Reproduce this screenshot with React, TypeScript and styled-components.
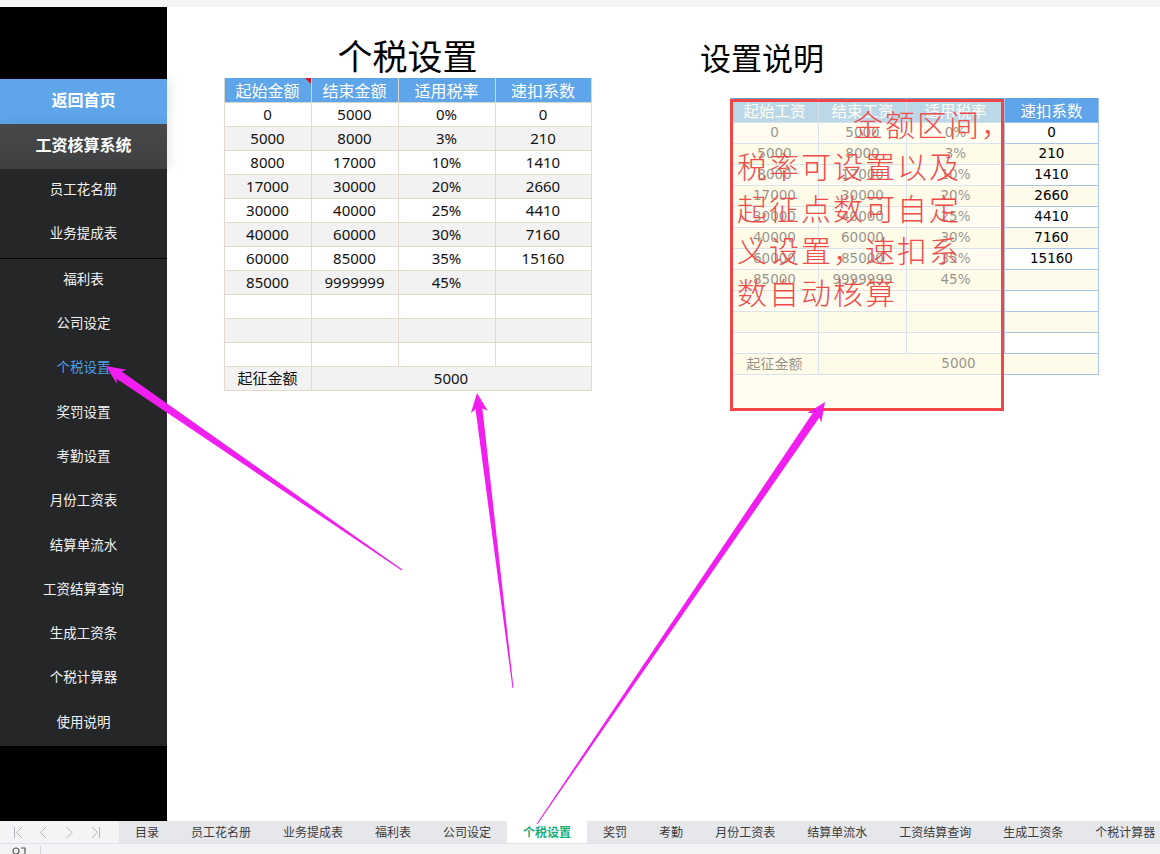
import React from 'react'
import styled, { createGlobalStyle } from 'styled-components'

const GlobalStyle = createGlobalStyle`
  html, body {
    margin: 0;
    padding: 0;
    background: #ffffff;
  }
  body {
    font-family: "Noto Sans", "Noto Sans CJK SC", sans-serif;
  }
  * {
    box-sizing: border-box;
  }
`

const Page = styled.div`
  position: relative;
  width: 1160px;
  height: 854px;
  display: flex;
  flex-direction: column;
  overflow: hidden;
`

const TopStrip = styled.div`
  flex: none;
  height: 7px;
  background: #f4f5f7;
`

const Main = styled.div`
  flex: none;
  height: 814px;
  display: flex;
`

/* ---------- sidebar ---------- */

const Sidebar = styled.nav`
  flex: none;
  width: 167px;
  background: #000;
  padding-top: 72px;
  display: flex;
  flex-direction: column;
  position: relative;
  z-index: 1;
`

const SideHead = styled.div<{ $home?: boolean }>`
  flex: none;
  height: 45px;
  padding-bottom: 6px;
  display: flex;
  align-items: center;
  justify-content: center;
  color: #fff;
  font-family: "Noto Sans CJK SC", sans-serif;
  font-size: 16px;
  font-weight: 700;
  background: ${p => (p.$home ? '#5ea5e9' : 'linear-gradient(#46484a, #3e4042)')};
  box-shadow: 3px 0 10px rgba(0, 0, 0, 0.09);
`

const MenuGroup = styled.div<{ $divider?: boolean }>`
  flex: none;
  background: #252628;
  border-bottom: ${p => (p.$divider ? '1px solid #050505' : 'none')};
`

const MenuItem = styled.div<{ $active?: boolean }>`
  height: 44.3px;
  padding-bottom: 6px;
  display: flex;
  align-items: center;
  justify-content: center;
  font-family: "Noto Sans CJK SC", sans-serif;
  font-size: 13.5px;
  color: ${p => (p.$active ? '#4d9fe6' : '#f2f2f2')};
`

/* ---------- content ---------- */

const Content = styled.main`
  flex: 1;
  background: #fff;
  display: flex;
  align-items: flex-start;
  padding: 28px 0 0 57px;
  gap: 109px;
`

const LeftBlock = styled.section`
  width: 367px;
  display: flex;
  flex-direction: column;
  align-items: center;
`

const BigTitle = styled.h1`
  margin: 0 0 3px;
  height: 40px;
  font-family: "Noto Sans CJK SC", sans-serif;
  font-weight: 400;
  font-size: 35px;
  line-height: 40px;
  color: #000;
`

const Sheet = styled.table`
  border-collapse: collapse;
  table-layout: fixed;
  width: 367px;
  font-family: "Noto Sans", "Noto Sans CJK SC", sans-serif;
  font-size: 15px;
  color: #111;
`

const Col = styled.col<{ $w: number }>`
  width: ${p => p.$w}px;
`

const HeadCell = styled.th<{ $flag?: boolean }>`
  position: relative;
  height: 24px;
  padding: 0;
  background: #5fa5e9;
  color: #fff;
  font-family: "Noto Sans CJK SC", sans-serif;
  font-weight: 400;
  font-size: 16px;
  line-height: 22px;
  border: 1px solid #dcd6c8;
  border-top: none;

  &::after {
    content: '';
    display: ${p => (p.$flag ? 'block' : 'none')};
    position: absolute;
    top: 0;
    right: 0;
    border-left: 6px solid transparent;
    border-top: 6px solid #e0101a;
  }
`

const SheetRow = styled.tr<{ $shade: boolean }>`
  background: ${p => (p.$shade ? '#f2f2f2' : '#ffffff')};
`

const Cell = styled.td`
  height: 24px;
  padding: 0;
  text-align: center;
  line-height: 22px;
  border: 1px solid #e3dccb;
  white-space: nowrap;
`

const RightBlock = styled.section`
  display: flex;
  flex-direction: column;
  padding-top: 4px;
`

const NoteTitle = styled.h2`
  margin: 0 0 23px;
  height: 36px;
  font-family: "Noto Sans CJK SC", sans-serif;
  font-weight: 400;
  font-size: 31px;
  line-height: 36px;
  color: #000;
`

const ShotWrap = styled.div`
  position: relative;
  margin-left: 30px;
  width: 368px;
`

const ShotTable = styled.table`
  border-collapse: collapse;
  table-layout: fixed;
  width: 368px;
  font-family: "DejaVu Sans", "Noto Sans CJK SC", sans-serif;
  font-size: 13.5px;
  color: #000;
`

const ShotHead = styled.th`
  height: 24px;
  padding: 0;
  background: #5fa4e8;
  color: #fff;
  font-family: "Noto Sans CJK SC", sans-serif;
  font-weight: 400;
  font-size: 15.5px;
  line-height: 22px;
  border: 1px solid #9fbfe6;
  border-top: none;
`

const ShotRow = styled.tr<{ $shade: boolean }>`
  background: ${p => (p.$shade ? '#fffbea' : '#ffffff')};
`

const ShotCell = styled.td`
  height: 21px;
  padding: 0;
  text-align: center;
  line-height: 19px;
  border: 1px solid #a8c4e8;
  white-space: nowrap;
`

const ShotLabel = styled(ShotCell)`
  font-family: "Noto Sans CJK SC", sans-serif;
  font-size: 14px;
`

const NoteBox = styled.div`
  position: absolute;
  left: 0;
  top: 1px;
  width: 274px;
  height: 312px;
  border: 3px solid #f24646;
  background: rgba(255, 251, 232, 0.58);
  padding: 0 0 0 4px;
`

const NoteLine = styled.div<{ $indent?: number }>`
  padding-left: ${p => p.$indent ?? 0}px;
  font-family: "Noto Sans CJK SC", sans-serif;
  font-weight: 300;
  font-size: 30px;
  letter-spacing: 2px;
  line-height: 42px;
  color: #f04c4c;
  white-space: nowrap;
`

/* ---------- sheet tabs ---------- */

const TabBar = styled.div`
  flex: none;
  height: 22px;
  display: flex;
  background: #e6e7eb;
`

const NavArea = styled.div`
  width: 119px;
  flex: none;
  display: flex;
  align-items: center;
  padding-left: 5px;
  background: #f3f4f6;
`

const NavBtn = styled.span`
  width: 26px;
  height: 22px;
  display: flex;
  align-items: center;
  justify-content: center;
`

const Tab = styled.div<{ $active?: boolean }>`
  flex: none;
  padding: 0 16px;
  font-family: "Noto Sans CJK SC", sans-serif;
  font-size: 12px;
  line-height: 22px;
  white-space: nowrap;
  color: ${p => (p.$active ? '#17ae78' : '#3a3a3a')};
  font-weight: ${p => (p.$active ? 700 : 400)};
  background: ${p => (p.$active ? '#ffffff' : 'transparent')};
`

const StatusBar = styled.div`
  flex: none;
  height: 11px;
  display: flex;
  align-items: flex-end;
  background: #f3f4f6;
  border-top: 1px solid #e1e2e5;
  padding-left: 12px;
  overflow: hidden;
`

const StatusSep = styled.span`
  width: 1px;
  height: 8px;
  margin-left: 13px;
  background: #d6d7da;
`

const ArrowLayer = styled.svg`
  position: absolute;
  left: 0;
  top: 0;
  width: 1160px;
  height: 854px;
  pointer-events: none;
  z-index: 5;
`

/* ---------- data ---------- */

const sideTop = ['员工花名册', '业务提成表']
const sideRest = ['福利表', '公司设定', '个税设置', '奖罚设置', '考勤设置', '月份工资表', '结算单流水', '工资结算查询', '生成工资条', '个税计算器', '使用说明']
const tabs = ['目录', '员工花名册', '业务提成表', '福利表', '公司设定', '个税设置', '奖罚', '考勤', '月份工资表', '结算单流水', '工资结算查询', '生成工资条', '个税计算器']

const rates: (string | number)[][] = [
  [0, 5000, '0%', 0],
  [5000, 8000, '3%', 210],
  [8000, 17000, '10%', 1410],
  [17000, 30000, '20%', 2660],
  [30000, 40000, '25%', 4410],
  [40000, 60000, '30%', 7160],
  [60000, 85000, '35%', 15160],
  [85000, 9999999, '45%', ''],
  ['', '', '', ''],
  ['', '', '', ''],
  ['', '', '', ''],
]

function arrowPoints(tx: number, ty: number, px: number, py: number, shaft: number) {
  const dx = px - tx
  const dy = py - ty
  const len = Math.hypot(dx, dy)
  const ux = dx / len
  const uy = dy / len
  const nx = -uy
  const ny = ux
  const headLen = 19
  const headW = 17
  const bx = px - ux * headLen
  const by = py - uy * headLen
  const pts = [
    [tx + nx * 0.5, ty + ny * 0.5],
    [bx + nx * shaft / 2 + ux * 3, by + ny * shaft / 2 + uy * 3],
    [bx + nx * headW / 2, by + ny * headW / 2],
    [px, py],
    [bx - nx * headW / 2, by - ny * headW / 2],
    [bx - nx * shaft / 2 + ux * 3, by - ny * shaft / 2 + uy * 3],
    [tx - nx * 0.5, ty - ny * 0.5],
  ]
  return pts.map(p => `${p[0].toFixed(1)},${p[1].toFixed(1)}`).join(' ')
}

const arrows = [
  { t: [402, 570], p: [106, 366], w: 9 },
  { t: [513, 688], p: [477, 393], w: 7 },
  { t: [537, 824], p: [825, 402], w: 8 },
]

const Chevron: React.FC<{ dir: 'first' | 'prev' | 'next' | 'last' }> = ({ dir }) => {
  const d = {
    first: 'M1.5 1 V12 M9 1 L3.5 6.5 L9 12',
    prev: 'M7 1 L1.5 6.5 L7 12',
    next: 'M1.5 1 L7 6.5 L1.5 12',
    last: 'M1 1 L6.5 6.5 L1 12 M8.5 1 V12',
  }[dir]
  return (
    <svg width="10" height="13" viewBox="0 0 10 13">
      <path d={d} fill="none" stroke="#b3b5b9" strokeWidth="1" />
    </svg>
  )
}

const App: React.FC = () => {
  return (
    <Page>
      <GlobalStyle />
      <TopStrip />
      <Main>
        <Sidebar>
          <SideHead $home>返回首页</SideHead>
          <SideHead>工资核算系统</SideHead>
          <MenuGroup $divider>
            {sideTop.map(s => <MenuItem key={s}>{s}</MenuItem>)}
          </MenuGroup>
          <MenuGroup>
            {sideRest.map(s => <MenuItem key={s} $active={s === '个税设置'}>{s}</MenuItem>)}
          </MenuGroup>
        </Sidebar>

        <Content>
          <LeftBlock>
            <BigTitle>个税设置</BigTitle>
            <Sheet>
              <colgroup>
                <Col $w={87} />
                <Col $w={87} />
                <Col $w={97} />
                <Col $w={96} />
              </colgroup>
              <thead>
                <tr>
                  <HeadCell $flag>起始金额</HeadCell>
                  <HeadCell>结束金额</HeadCell>
                  <HeadCell>适用税率</HeadCell>
                  <HeadCell>速扣系数</HeadCell>
                </tr>
              </thead>
              <tbody>
                {rates.map((r, i) => (
                  <SheetRow key={i} $shade={i % 2 === 1}>
                    {r.map((v, j) => <Cell key={j}>{v}</Cell>)}
                  </SheetRow>
                ))}
                <SheetRow $shade>
                  <Cell>起征金额</Cell>
                  <Cell colSpan={3}>5000</Cell>
                </SheetRow>
              </tbody>
            </Sheet>
          </LeftBlock>

          <RightBlock>
            <NoteTitle>设置说明</NoteTitle>
            <ShotWrap>
              <ShotTable>
                <colgroup>
                  <Col $w={88} />
                  <Col $w={88} />
                  <Col $w={98} />
                  <Col $w={94} />
                </colgroup>
                <thead>
                  <tr>
                    <ShotHead>起始工资</ShotHead>
                    <ShotHead>结束工资</ShotHead>
                    <ShotHead>适用税率</ShotHead>
                    <ShotHead>速扣系数</ShotHead>
                  </tr>
                </thead>
                <tbody>
                  {rates.map((r, i) => (
                    <ShotRow key={i} $shade={i % 2 === 1}>
                      {r.map((v, j) => <ShotCell key={j}>{v}</ShotCell>)}
                    </ShotRow>
                  ))}
                  <ShotRow $shade>
                    <ShotLabel>起征金额</ShotLabel>
                    <ShotCell colSpan={3}>5000</ShotCell>
                  </ShotRow>
                </tbody>
              </ShotTable>
              <NoteBox>
                <NoteLine $indent={116}>金额区间，</NoteLine>
                <NoteLine>税率可设置以及</NoteLine>
                <NoteLine>起征点数可自定</NoteLine>
                <NoteLine>义设置，速扣系</NoteLine>
                <NoteLine>数自动核算</NoteLine>
              </NoteBox>
            </ShotWrap>
          </RightBlock>
        </Content>
      </Main>

      <TabBar>
        <NavArea>
          <NavBtn><Chevron dir="first" /></NavBtn>
          <NavBtn><Chevron dir="prev" /></NavBtn>
          <NavBtn><Chevron dir="next" /></NavBtn>
          <NavBtn><Chevron dir="last" /></NavBtn>
        </NavArea>
        {tabs.map(t => <Tab key={t} $active={t === '个税设置'}>{t}</Tab>)}
      </TabBar>
      <StatusBar>
        <svg width="15" height="8" viewBox="0 0 15 8">
          <circle cx="4" cy="5" r="3" fill="none" stroke="#555" strokeWidth="1.2" />
          <path d="M9 2 H13 V8" fill="none" stroke="#555" strokeWidth="1.2" />
        </svg>
        <StatusSep />
      </StatusBar>

      <ArrowLayer viewBox="0 0 1160 854">
        {arrows.map((a, i) => (
          <polygon key={i} points={arrowPoints(a.t[0], a.t[1], a.p[0], a.p[1], a.w)} fill="#f01ff0" />
        ))}
      </ArrowLayer>
    </Page>
  )
}

export default App
